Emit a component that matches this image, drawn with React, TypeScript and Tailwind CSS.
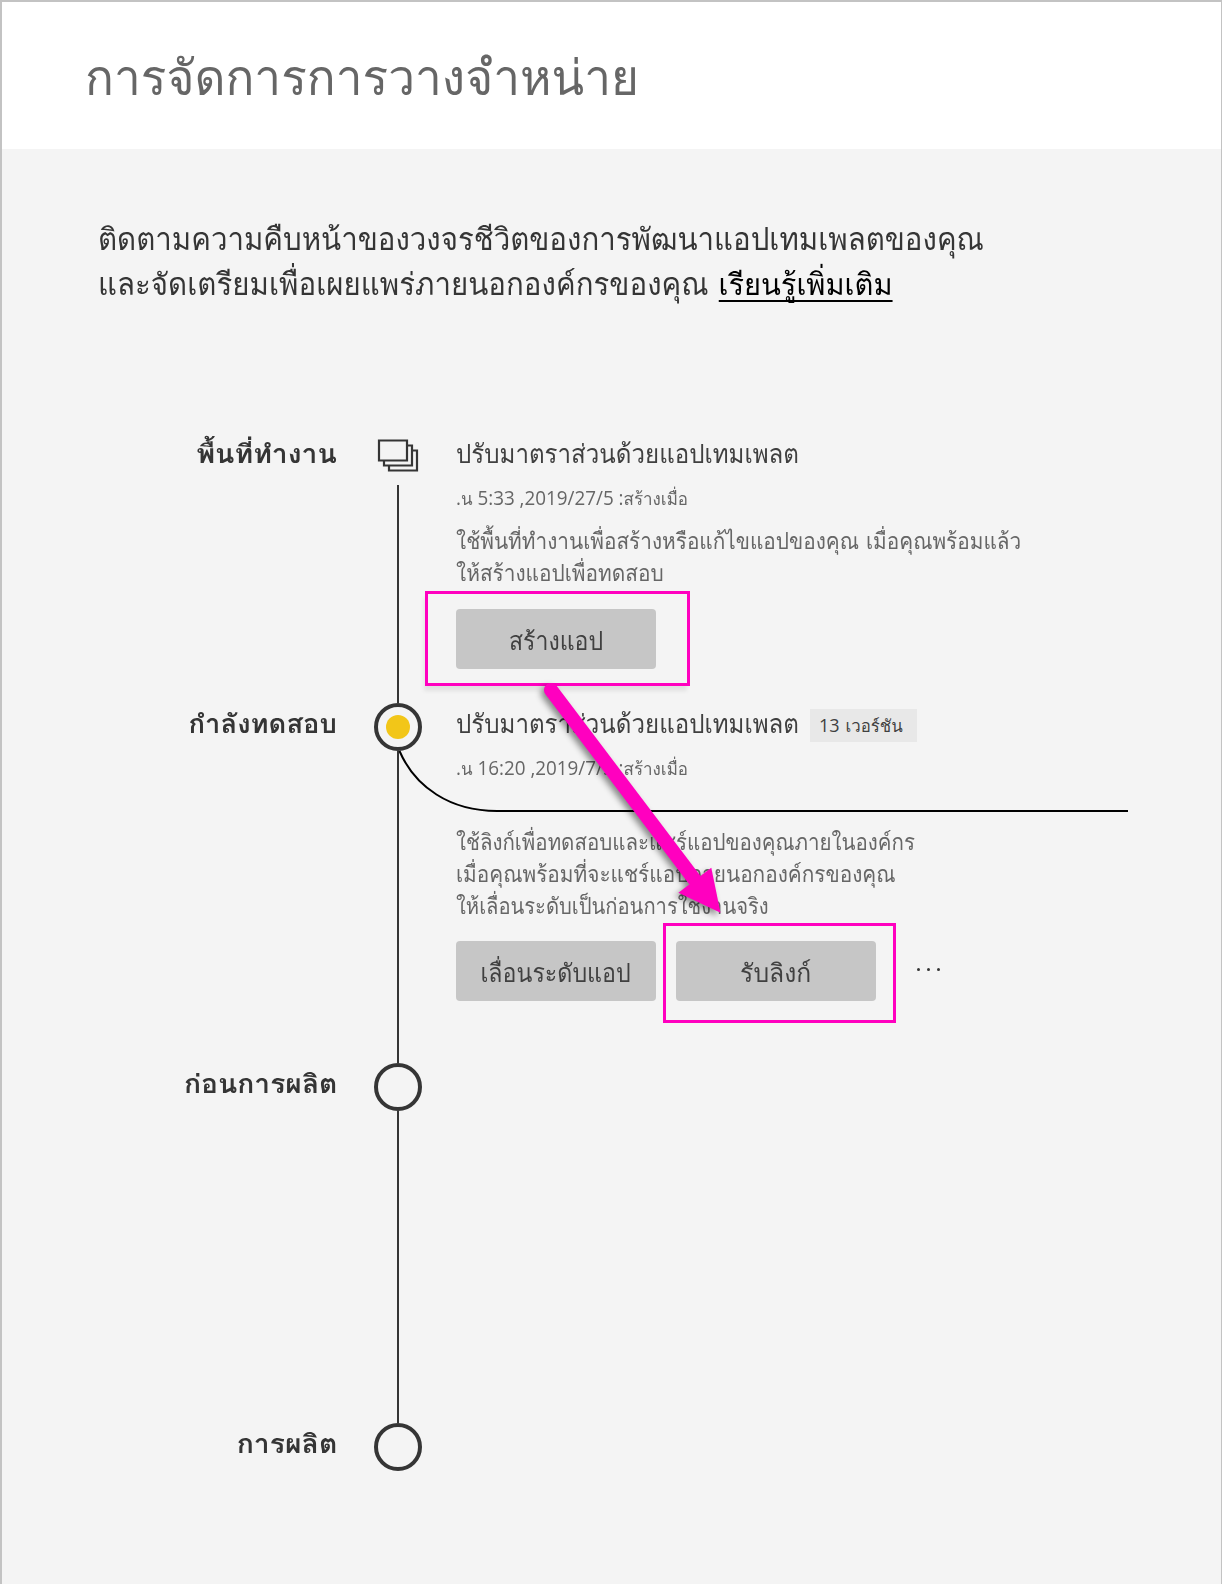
import type { ReactNode } from "react";

function Marker({ children }: { children?: ReactNode }) {
  return (
    <div className="flex size-12 shrink-0 items-center justify-center rounded-full border-4 border-[#353535]">
      {children}
    </div>
  );
}

type StageProps = { label: ReactNode; marker: ReactNode; height: string; children?: ReactNode; last?: boolean };

function Stage({ label, marker, height, children, last }: StageProps) {
  return (
    <section className={`relative flex ${height}`}>
      <div className="flex w-[335px] shrink-0 justify-end whitespace-nowrap text-[26px] font-bold leading-[42px] text-[#353535]">
        {label}
      </div>
      <div className="ml-[37px] flex w-12 shrink-0 flex-col items-center">
        {marker}
        {!last && <div className="w-0.5 flex-1 bg-[#353535]" />}
      </div>
      <div className="ml-[34px] flex flex-col items-start whitespace-nowrap">{children}</div>
    </section>
  );
}

function AppName() {
  return (
    <h2 className="w-[342px] text-[26px] leading-[42px] text-[#404040]">
      <span className="block w-fit origin-left scale-x-[0.927]">ปรับมาตราส่วนด้วยแอปเทมเพลต</span>
    </h2>
  );
}

function Created({ time }: { time: string }) {
  return (
    <p className="mt-[3px] h-[40px] origin-left scale-x-[0.942] font-['Open_Sans',Loma,sans-serif] text-[20px] leading-[40px] text-[#666]">
      .<span className="text-[18px]">น</span> {time} :<span className="text-[18px]">สร้างเมื่อ</span>
    </p>
  );
}

function Action({ children }: { children: ReactNode }) {
  return (
    <button className="flex h-[60px] w-[200px] shrink-0 items-center justify-center rounded-[4px] bg-[#c6c6c6] pt-1 text-[25.5px] leading-[56px] text-[#404040]">
      {children}
    </button>
  );
}

function StackIcon() {
  return (
    <svg className="h-[34px] w-12" viewBox="0 0 48 34" fill="#f4f4f4" stroke="#353535" strokeWidth="2.2">
      <path d="M15 12.500h28v20H15z" />
      <path d="M10 7.500h28v20H10z" />
      <path d="M5 2.500h28v20H5z" />
    </svg>
  );
}

export default function App() {
  return (
    <div className="relative h-[1584px] w-[1222px] overflow-hidden border-l-2 border-r border-t-2 border-[#c3c3c3] bg-[#f4f4f4] font-[Loma,'Noto_Sans',sans-serif]">
      <header className="h-[147px] bg-white pl-[83px] pt-[35px]">
        <h1 className="w-fit origin-left scale-x-[0.965] text-[49.5px] leading-[81px] text-[#666]">การจัดการการวางจำหน่าย</h1>
      </header>
      <p className="ml-[96px] mt-[68px] w-fit origin-left scale-x-[0.955] whitespace-nowrap text-[30.8px] leading-[45px] text-[#353535]">
        ติดตามความคืบหน้าของวงจรชีวิตของการพัฒนาแอปเทมเพลตของคุณ
        <br />
        <span className="tracking-[0.03px]">และจัดเตรียมเพื่อเผยแพร่ภายนอกองค์กรของคุณ </span>
        <a className="inline-block h-[40px] border-b-2 border-black text-[30.4px] text-black">เรียนรู้เพิ่มเติม</a>
      </p>
      <main className="mt-[126px]">
        <Stage
          height="h-[270px]"
          label={<span className="origin-right scale-x-[1.09]">พื้นที่ทำงาน</span>}
          marker={<div className="h-[52px] pt-[5px]"><StackIcon /></div>}
        >
          <AppName />
          <Created time="5:33 ,2019/27/5" />
          <p className="mt-[7px] text-[22.5px] leading-[32px] text-[#666]">
            <span className="block w-fit origin-left scale-x-[0.923]">ใช้พื้นที่ทำงานเพื่อสร้างหรือแก้ไขแอปของคุณ เมื่อคุณพร้อมแล้ว</span>
            <span className="block w-fit origin-left scale-x-[0.925]">ให้สร้างแอปเพื่อทดสอบ</span>
          </p>
          <div className="mt-5 flex">
            <Action><span className="scale-x-[0.905]">สร้างแอป</span></Action>
          </div>
        </Stage>
        <Stage
          height="h-[360px]"
          label={<span className="origin-right scale-x-[1.053]">กำลังทดสอบ</span>}
          marker={<Marker><div className="size-6 rounded-full bg-[#f2c618]" /></Marker>}
        >
          <div className="flex h-[42px] items-center">
            <AppName />
            <span className="ml-[12px] mt-[3px] flex h-[33px] w-[107px] items-baseline bg-[#e8e8e8] pl-[9px] text-[16.8px] leading-[33px] text-[#404040]">
              <span className="mr-1.5 font-['Open_Sans'] text-[18px]">13</span>เวอร์ชัน
            </span>
          </div>
          <Created time="16:20 ,2019/7/5" />
          <p className="mt-[38px] text-[22.5px] leading-[32px] text-[#666]">
            <span className="block w-fit origin-left scale-x-[0.91]">ใช้ลิงก์เพื่อทดสอบและแชร์แอปของคุณภายในองค์กร</span>
            <span className="block w-fit origin-left scale-x-[0.924]">เมื่อคุณพร้อมที่จะแชร์แอปภายนอกองค์กรของคุณ</span>
            <span className="block w-fit origin-left scale-x-[0.896]">ให้เลื่อนระดับเป็นก่อนการใช้งานจริง</span>
          </p>
          <div className="mt-[19px] flex items-center gap-[20px]">
            <Action><span className="scale-x-[0.91]">เลื่อนระดับแอป</span></Action>
            <Action><span className="scale-x-[0.97]">รับลิงก์</span></Action>
            <button className="-mt-[3px] ml-[21px] flex gap-[7px]">
              <i className="size-[3px] rounded-full bg-[#353535]" />
              <i className="size-[3px] rounded-full bg-[#353535]" />
              <i className="size-[3px] rounded-full bg-[#353535]" />
            </button>
          </div>
          <svg className="absolute left-[370px] top-[46px] h-[66px] w-[760px]" viewBox="0 0 760 66" fill="none" stroke="#000" strokeWidth="2">
            <path d="M27.500 2C43 38 78 62 125 62H756" />
          </svg>
        </Stage>
        <Stage height="h-[360px]" label={<span className="origin-right scale-x-[1.085]">ก่อนการผลิต</span>} marker={<Marker />} />
        <Stage height="h-[48px]" last label={<span className="origin-right scale-x-[1.09]">การผลิต</span>} marker={<Marker />} />
      </main>
      <div className="absolute left-[423px] top-[589px] h-[95px] w-[265px] border-[3px] border-[#ff00bf] shadow-[-2px_6px_4px_-1px_rgba(0,0,0,0.08)]" />
      <div className="absolute left-[661px] top-[921px] h-[100px] w-[233px] border-[3px] border-[#ff00bf]" />
      <svg className="absolute left-[528px] top-[668px] h-[260px] w-[220px] drop-shadow-[-3px_3px_3px_rgba(0,0,0,0.45)]" viewBox="530 670 220 260">
        <path d="M551 690L694 879" stroke="#ff00bf" strokeWidth="14" strokeLinecap="round" />
        <path d="M711.300 867.700L678.400 892.700L720.500 912.700z" fill="#ff00bf" />
      </svg>
    </div>
  );
}
